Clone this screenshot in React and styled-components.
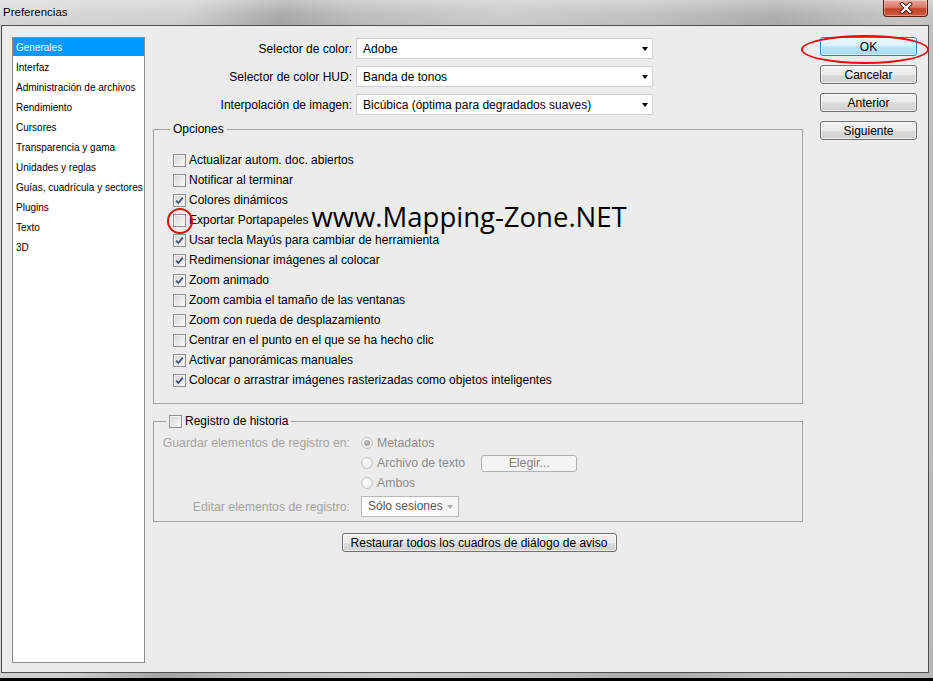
import React from 'react';
import styled, { createGlobalStyle } from 'styled-components';

const Global = createGlobalStyle`
  html, body { margin: 0; padding: 0; background: #000; }
  body { width: 933px; height: 681px; overflow: hidden; font-family: "Liberation Sans", Arial, sans-serif; }
  * { box-sizing: border-box; }
`;

const Window = styled.div`
  width: 933px;
  height: 678px;
  display: flex;
  flex-direction: column;
  padding: 0 4px 5px 1px;
  background:
    linear-gradient(to bottom, rgba(255,255,255,0.35) 0px, rgba(255,255,255,0.08) 14px, rgba(0,0,0,0) 25px),
    linear-gradient(100deg, #d6d6d6 0%, #cdcdcd 18%, #a4a4a4 27%, #b9b9b9 34%, #c9c9c9 48%, #bdbdbd 62%, #a9a9a9 74%, #c3c3c3 86%, #b7b7b7 100%);
`;

const TitleBar = styled.div`
  height: 25px;
  display: flex;
  align-items: flex-start;
  justify-content: space-between;
  padding-left: 2px;
`;

const Title = styled.span`
  font-family: "Liberation Sans", Arial, sans-serif;
  font-size: 11.5px;
  line-height: 24px;
  color: #000;
  text-shadow: 0 0 6px rgba(255,255,255,0.9);
`;

const CloseButton = styled.div`
  width: 45px;
  height: 17px;
  margin-right: 1px;
  border: 1px solid #5a1d14;
  border-top: none;
  border-radius: 0 0 4px 4px;
  background: linear-gradient(to bottom, #e9a99b 0%, #d97a68 45%, #c2432c 55%, #cf5a3e 100%);
  box-shadow: inset 0 0 0 1px rgba(255,255,255,0.35);
  display: flex;
  align-items: center;
  justify-content: center;
`;

const Client = styled.div`
  flex: 1;
  display: flex;
  align-items: flex-start;
  background: #ececec;
  border: 1px solid #4f4f4f;
  padding: 11px 0 0 10px;
`;

const Sidebar = styled.ul`
  list-style: none;
  margin: 0;
  padding: 0;
  width: 133px;
  height: 626px;
  flex-shrink: 0;
  background: #fff;
  border: 1px solid #8a8a8a;
`;

const NavItem = styled.li`
  height: 18px;
  margin-bottom: 2px;
  line-height: 19px;
  padding-left: 3px;
  font-size: 10px;
  white-space: nowrap;
  color: ${p => (p.$active ? '#fff' : '#000')};
  background: ${p => (p.$active ? '#0099ff' : 'transparent')};
`;

const Main = styled.div`
  width: 650px;
  margin-left: 8px;
  padding-top: 1px;
  display: flex;
  flex-direction: column;
  flex-shrink: 0;
`;

const SelectorGrid = styled.div`
  display: grid;
  grid-template-columns: 199px 297px;
  column-gap: 4px;
  row-gap: 7px;
  align-items: center;
`;

const FieldLabel = styled.span`
  font-size: ${p => (p.$disabled ? '12.3px' : '12px')};
  text-align: right;
  white-space: nowrap;
  color: ${p => (p.$disabled ? '#a3a3a3' : '#000')};
`;

const Select = styled.div`
  height: 21px;
  display: flex;
  align-items: center;
  justify-content: space-between;
  background: #fff;
  border: 1px solid #d2d2d2;
  padding: 0 2px 0 6px;
  font-size: 12px;
  color: #000;
`;

const Arrow = styled.span`
  width: 0;
  height: 0;
  border-left: 3.5px solid transparent;
  border-right: 3.5px solid transparent;
  border-top: 4px solid ${p => (p.$disabled ? '#aaa' : '#000')};
  margin-right: 2px;
`;

const DisabledSelect = styled.div`
  width: 98px;
  height: 21px;
  display: flex;
  border: 1px solid #b9b9b9;
  background: #f6f6f6;
`;

const DisabledSelectText = styled.span`
  width: 78px;
  background: #fff;
  padding-left: 6px;
  font-size: 12px;
  line-height: 19px;
  color: #555;
  white-space: nowrap;
`;

const DisabledArrowBox = styled.span`
  flex: 1;
  display: flex;
  align-items: center;
  justify-content: center;
  padding-left: 3px;
`;

const Group = styled.fieldset`
  margin: ${p => p.$mt}px 0 0 0;
  padding: ${p => p.$pad};
  border: 1px solid #a2a2a2;
  min-width: 0;
`;

const Legend = styled.legend`
  padding: 0 3px;
  margin-left: ${p => p.$ml}px;
  font-size: 12px;
  line-height: 16px;
  height: 16px;
  color: #000;
  white-space: nowrap;
`;

const LegendInner = styled.span`
  display: flex;
  align-items: center;
  height: 16px;
`;

const CheckRow = styled.div`
  display: flex;
  align-items: center;
  height: 20px;
  font-size: 12px;
  line-height: 20px;
  color: #000;
  white-space: nowrap;
`;

const Box = styled.span`
  position: relative;
  width: 13px;
  height: 13px;
  flex-shrink: 0;
  margin-right: 3px;
  border: 1px solid #8e8f8f;
  background: linear-gradient(135deg, #d3d3d3 0%, #e9e9e9 55%, #f8f8f8 100%);
  box-shadow: inset 0 0 0 1px #f2f2f2;
  display: flex;
  align-items: center;
  justify-content: center;
`;

const RedCircle = styled.span`
  position: absolute;
  left: -7px;
  top: -7px;
  width: 26px;
  height: 26px;
  border: 2px solid #e20d0d;
  border-radius: 50%;
  pointer-events: none;
`;

const Watermark = styled.span`
  font-family: "Open Sans", "Liberation Sans", sans-serif;
  font-size: 27.5px;
  line-height: 20px;
  color: #000;
  margin-left: 3px;
  margin-bottom: 7px;
`;

const HistoryGrid = styled.div`
  display: grid;
  grid-template-columns: 188px auto;
  grid-template-rows: 20px 20px 20px 24px;
  column-gap: 11px;
  align-items: center;
`;

const RadioRow = styled.div`
  display: flex;
  align-items: center;
  font-size: 12.3px;
  color: #8c8c8c;
  white-space: nowrap;
`;

const Radio = styled.span`
  width: 12px;
  height: 12px;
  border-radius: 50%;
  border: 1px solid #c4c4c4;
  background: radial-gradient(circle at 40% 35%, #ffffff 0%, #e6e6e6 90%);
  margin-right: 4px;
  display: flex;
  align-items: center;
  justify-content: center;
  &::after {
    content: '';
    width: 6px;
    height: 6px;
    border-radius: 50%;
    background: ${p => (p.$checked ? 'radial-gradient(circle at 40% 35%, #c4c4c4, #8e8e8e)' : 'transparent')};
  }
`;

const EditRow = styled.div`
  grid-column: 1 / -1;
  align-self: end;
  display: grid;
  grid-template-columns: 188px auto;
  column-gap: 11px;
  align-items: center;
  height: 21px;
`;

const Button = styled.button`
  height: ${p => p.$h || 19}px;
  width: ${p => p.$w}px;
  padding: 0;
  font-family: "Liberation Sans", Arial, sans-serif;
  font-size: 12px;
  line-height: 1;
  color: #000;
  border: 1px solid ${p => (p.$default ? '#3c7fb1' : '#707070')};
  border-radius: 3px;
  background: ${p =>
    p.$default
      ? 'linear-gradient(to bottom, #eaf6fd 0%, #d9f0fc 50%, #bee6fd 50%, #a7d9f5 100%)'
      : 'linear-gradient(to bottom, #f2f2f2 0%, #ebebeb 50%, #dddddd 50%, #cfcfcf 100%)'};
  box-shadow: inset 0 0 0 1px rgba(255,255,255,0.6);
  position: relative;
`;

const DisabledButton = styled.div`
  width: 96px;
  height: 17px;
  margin-left: 16px;
  display: flex;
  align-items: center;
  justify-content: center;
  font-size: 12.3px;
  color: #838383;
  border: 1px solid #adb2b5;
  border-radius: 3px;
  background: #f4f4f4;
`;

const ButtonColumn = styled.div`
  width: 97px;
  margin-left: 17px;
  display: flex;
  flex-direction: column;
  gap: 9px;
`;

const RedEllipse = styled.span`
  position: absolute;
  left: -20px;
  top: -3px;
  width: 128px;
  height: 29px;
  border: 2px solid #e20d0d;
  border-radius: 50%;
  pointer-events: none;
`;

const RestoreWrap = styled.div`
  display: flex;
  justify-content: center;
  margin-top: 11px;
  padding-left: 2px;
`;

const CheckMark = () => (
  <svg width="9" height="9" viewBox="0 0 9 9">
    <path d="M1.2 4.6 L3.4 7 L7.8 1.6" fill="none" stroke="#3b4a78" strokeWidth="1.7" />
  </svg>
);

const Check = ({ checked, circled }) => (
  <Box>
    {checked && <CheckMark />}
    {circled && <RedCircle />}
  </Box>
);

const navItems = [
  'Generales',
  'Interfaz',
  'Administración de archivos',
  'Rendimiento',
  'Cursores',
  'Transparencia y gama',
  'Unidades y reglas',
  'Guías, cuadrícula y sectores',
  'Plugins',
  'Texto',
  '3D',
];

const options = [
  ['Actualizar autom. doc. abiertos', false],
  ['Notificar al terminar', false],
  ['Colores dinámicos', true],
  ['Exportar Portapapeles', false, true],
  ['Usar tecla Mayús para cambiar de herramienta', true],
  ['Redimensionar imágenes al colocar', true],
  ['Zoom animado', true],
  ['Zoom cambia el tamaño de las ventanas', false],
  ['Zoom con rueda de desplazamiento', false],
  ['Centrar en el punto en el que se ha hecho clic', false],
  ['Activar panorámicas manuales', true],
  ['Colocar o arrastrar imágenes rasterizadas como objetos inteligentes', true],
];

export default function App() {
  return (
    <>
      <Global />
      <Window>
        <TitleBar>
          <Title>Preferencias</Title>
          <CloseButton>
            <svg width="14" height="12" viewBox="0 0 14 12">
              <path d="M3 2 L11 10 M11 2 L3 10" stroke="#4a1710" strokeWidth="4" strokeLinecap="square" />
              <path d="M3 2 L11 10 M11 2 L3 10" stroke="#fff" strokeWidth="2.2" strokeLinecap="square" />
            </svg>
          </CloseButton>
        </TitleBar>
        <Client>
          <Sidebar>
            {navItems.map((n, i) => (
              <NavItem key={n} $active={i === 0}>{n}</NavItem>
            ))}
          </Sidebar>
          <Main>
            <SelectorGrid>
              <FieldLabel>Selector de color:</FieldLabel>
              <Select>Adobe<Arrow /></Select>
              <FieldLabel>Selector de color HUD:</FieldLabel>
              <Select>Banda de tonos<Arrow /></Select>
              <FieldLabel>Interpolación de imagen:</FieldLabel>
              <Select>Bicúbica (óptima para degradados suaves)<Arrow /></Select>
            </SelectorGrid>

            <Group $mt={6} $pad="13px 0 13px 19px">
              <Legend $ml={-3}>Opciones</Legend>
              {options.map(([label, checked, circled]) => (
                <CheckRow key={label}>
                  <Check checked={checked} circled={circled} />
                  {label}
                  {circled && <Watermark>www.Mapping-Zone.NET</Watermark>}
                </CheckRow>
              ))}
            </Group>

            <Group $mt={9} $pad="4px 0 4px 8px">
              <Legend $ml={4}>
                <LegendInner>
                  <Check checked={false} />
                  Registro de historia
                </LegendInner>
              </Legend>
              <HistoryGrid>
                <FieldLabel $disabled>Guardar elementos de registro en:</FieldLabel>
                <RadioRow><Radio $checked />Metadatos</RadioRow>
                <span />
                <RadioRow>
                  <Radio />Archivo de texto
                  <DisabledButton>Elegir...</DisabledButton>
                </RadioRow>
                <span />
                <RadioRow><Radio />Ambos</RadioRow>
                <EditRow>
                  <FieldLabel $disabled>Editar elementos de registro:</FieldLabel>
                  <DisabledSelect>
                    <DisabledSelectText>Sólo sesiones</DisabledSelectText>
                    <DisabledArrowBox><Arrow $disabled /></DisabledArrowBox>
                  </DisabledSelect>
                </EditRow>
              </HistoryGrid>
            </Group>

            <RestoreWrap>
              <Button $w={275} $h={19}>Restaurar todos los cuadros de diálogo de aviso</Button>
            </RestoreWrap>
          </Main>
          <ButtonColumn>
            <Button $w={97} $default>OK<RedEllipse /></Button>
            <Button $w={97}>Cancelar</Button>
            <Button $w={97}>Anterior</Button>
            <Button $w={97}>Siguiente</Button>
          </ButtonColumn>
        </Client>
      </Window>
    </>
  );
}
